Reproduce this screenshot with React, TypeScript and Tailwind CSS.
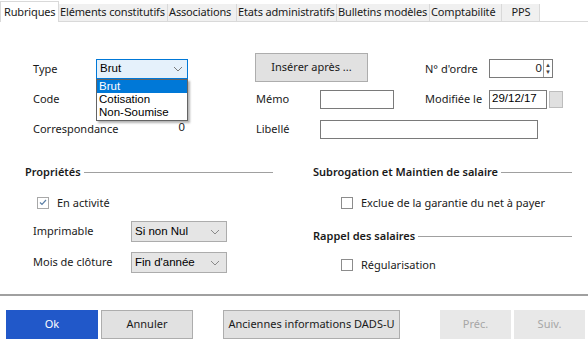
import React from 'react';

const tabs = [
  { label: 'Eléments constitutifs', w: 'w-[109px]' },
  { label: 'Associations', w: 'w-[69px]' },
  { label: 'Etats administratifs', w: 'w-[100px]' },
  { label: 'Bulletins modèles', w: 'w-[93px]' },
  { label: 'Comptabilité', w: 'w-[72px]' },
  { label: 'PPS', w: 'w-[38px]' },
];

const Chevron: React.FC<{ color?: string }> = ({ color = '#6b6b6b' }) => (
  <svg width="10" height="6" viewBox="0 0 10 6" fill="none">
    <path d="M1 1l4 4 4-4" stroke={color} strokeWidth="1" />
  </svg>
);

const Checkbox: React.FC<{ checked?: boolean }> = ({ checked }) => (
  <div
    className={`w-[12px] h-[12px] border bg-white flex items-center justify-center ${
      checked ? 'border-[#a8a8a8]' : 'border-[#8c8c8c]'
    }`}
  >
    {checked && (
      <svg width="8" height="7" viewBox="0 0 8 7" fill="none">
        <path d="M1 3.5l2 2 4-4.5" stroke="#5b7fa6" strokeWidth="1.2" />
      </svg>
    )}
  </div>
);

const GraySelect: React.FC<{ value: string }> = ({ value }) => (
  <div className="w-[96px] h-[21px] bg-[#e5e5e5] border border-[#acacac] flex items-center justify-between pl-[3px] pr-[6px] font-['Liberation_Sans',sans-serif] text-[11.5px] text-black">
    <span>{value}</span>
    <Chevron color="#8a8a8a" />
  </div>
);

const Section: React.FC<{ title: string }> = ({ title }) => (
  <div className="flex items-center gap-[3px]">
    <span className="font-semibold">{title}</span>
    <div className="flex-1 h-px bg-[#a0a0a0]" />
  </div>
);

const App: React.FC = () => {
  return (
    <div className="w-[588px] h-[345px] bg-white overflow-hidden font-['Noto_Sans',sans-serif] text-[11px] text-[#1a1a1a] flex flex-col">
      {/* Tabs */}
      <div className="flex items-end h-[22px] whitespace-nowrap tracking-[-0.15px]">
        <div className="w-[59px] h-[21px] bg-white border border-b-0 border-[#d9d9d9] flex items-center pl-[3px]">
          Rubriques
        </div>
        {tabs.map((t) => (
          <div
            key={t.label}
            className={`${t.w} h-[18px] bg-[#f0f0f0] border-r border-b border-[#d9d9d9] flex items-center pl-[1px] overflow-hidden ${
              t.label === 'PPS' ? 'justify-center' : ''
            }`}
          >
            {t.label}
          </div>
        ))}
        <div className="flex-1 border-b border-[#d9d9d9]" />
      </div>

      {/* Row 1 */}
      <div className="flex items-start mt-[31px] h-[29px]">
        <div className="w-[33px]" />
        <div className="w-[63px] mt-[8px]">Type</div>
        <div className="relative w-[92px] h-[20px] mt-[6px]">
          <div className="w-full h-full bg-[#e5f1fb] border border-[#0078d7] flex items-center justify-between pl-[3px] pr-[4px] font-['Liberation_Sans',sans-serif] text-[11.5px] text-black">
            <span>Brut</span>
            <Chevron color="#7a7a7a" />
          </div>
          <div className="absolute left-0 top-[20px] w-[92px] bg-white border border-[#646464] shadow-[2px_2px_2px_rgba(0,0,0,0.3)] z-10 font-['Liberation_Sans',sans-serif] text-[11.5px] leading-[13px] text-black">
            <div className="bg-[#0078d7] text-white pl-[2px]">Brut</div>
            <div className="pl-[2px]">Cotisation</div>
            <div className="pl-[2px] pb-[1px]">Non-Soumise</div>
          </div>
        </div>
        <div className="w-[67px]" />
        <div className="w-[113px] h-[29px] bg-[#e1e1e1] border border-[#adadad] flex items-center justify-center">
          Insérer après ...
        </div>
        <div className="w-[57px]" />
        <div className="w-[64px] mt-[8px]">N° d'ordre</div>
        <div className="w-[64px] h-[19px] mt-[6px] border border-[#7a7a7a] flex items-center justify-end font-['Liberation_Sans',sans-serif] text-[11.5px]">
          <span className="mr-[1px]">0</span>
          <div className="w-[9px] h-full border-l border-[#9a9a9a] flex flex-col items-center justify-center text-[6px] leading-[7px] text-[#444]">
            <span>▲</span>
            <span>▼</span>
          </div>
        </div>
      </div>

      {/* Row 2 */}
      <div className="flex items-center mt-[7px] h-[20px]">
        <div className="w-[33px]" />
        <div className="w-[63px]">Code</div>
        <div className="w-[92px]" />
        <div className="w-[68px]" />
        <div className="w-[64px]">Mémo</div>
        <div className="w-[74px] h-[19px] border border-[#7a7a7a]" />
        <div className="w-[31px]" />
        <div className="w-[64px]">Modifiée le</div>
        <div className="w-[58px] h-[19px] border border-[#7a7a7a] flex items-center pl-[2px] font-['Liberation_Sans',sans-serif] text-[11.5px] text-black">
          29/12/17
        </div>
        <div className="ml-[2px] w-[14px] h-[17px] bg-[#e0e0e0] border border-[#bdbdbd]" />
      </div>

      {/* Row 3 */}
      <div className="flex items-center mt-[10px] h-[20px]">
        <div className="w-[33px]" />
        <div className="w-[63px]">Correspondance</div>
        <div className="w-[89px] text-right font-['Liberation_Sans',sans-serif] text-[11.5px] -mt-[3px]">0</div>
        <div className="w-[71px]" />
        <div className="w-[64px]">Libellé</div>
        <div className="w-[218px] h-[19px] border border-[#7a7a7a]" />
      </div>

      {/* Sections */}
      <div className="flex mt-[25px]">
        <div className="w-[273px] pl-[25px]">
          <Section title="Propriétés" />
          <div className="flex items-center gap-[8px] pl-[12px] mt-[14px]">
            <Checkbox checked />
            <span>En activité</span>
          </div>
          <div className="flex items-center mt-[10px]">
            <div className="w-[106px] pl-[8px]">Imprimable</div>
            <GraySelect value="Si non Nul" />
          </div>
          <div className="flex items-center mt-[10px]">
            <div className="w-[106px] pl-[8px]">Mois de clôture</div>
            <GraySelect value="Fin d'année" />
          </div>
        </div>
        <div className="w-[40px]" />
        <div className="w-[259px]">
          <Section title="Subrogation et Maintien de salaire" />
          <div className="flex items-center gap-[8px] pl-[28px] mt-[14px]">
            <Checkbox />
            <span>Exclue de la garantie du net à payer</span>
          </div>
          <div className="mt-[17px]">
            <Section title="Rappel des salaires" />
          </div>
          <div className="flex items-center gap-[8px] pl-[28px] mt-[12px]">
            <Checkbox />
            <span>Régularisation</span>
          </div>
        </div>
      </div>

      {/* Divider */}
      <div className="mt-[21px] h-[2px] bg-[#a0a0a0]" />

      {/* Footer buttons */}
      <div className="flex items-center mt-[14px] pl-[6px]">
        <div className="w-[92px] h-[29px] bg-[#2158c9] text-white flex items-center justify-center">Ok</div>
        <div className="ml-[3px] w-[92px] h-[29px] bg-[#e1e1e1] border border-[#adadad] flex items-center justify-center">
          Annuler
        </div>
        <div className="ml-[30px] w-[177px] h-[29px] bg-[#e1e1e1] border border-[#adadad] flex items-center justify-center">
          Anciennes informations DADS-U
        </div>
        <div className="ml-[40px] w-[71px] h-[29px] bg-[#e8e8e8] text-[#a6a6a6] flex items-center justify-center">
          Préc.
        </div>
        <div className="ml-[3px] w-[71px] h-[29px] bg-[#e8e8e8] text-[#a6a6a6] flex items-center justify-center">
          Suiv.
        </div>
      </div>
    </div>
  );
};

export default App;
